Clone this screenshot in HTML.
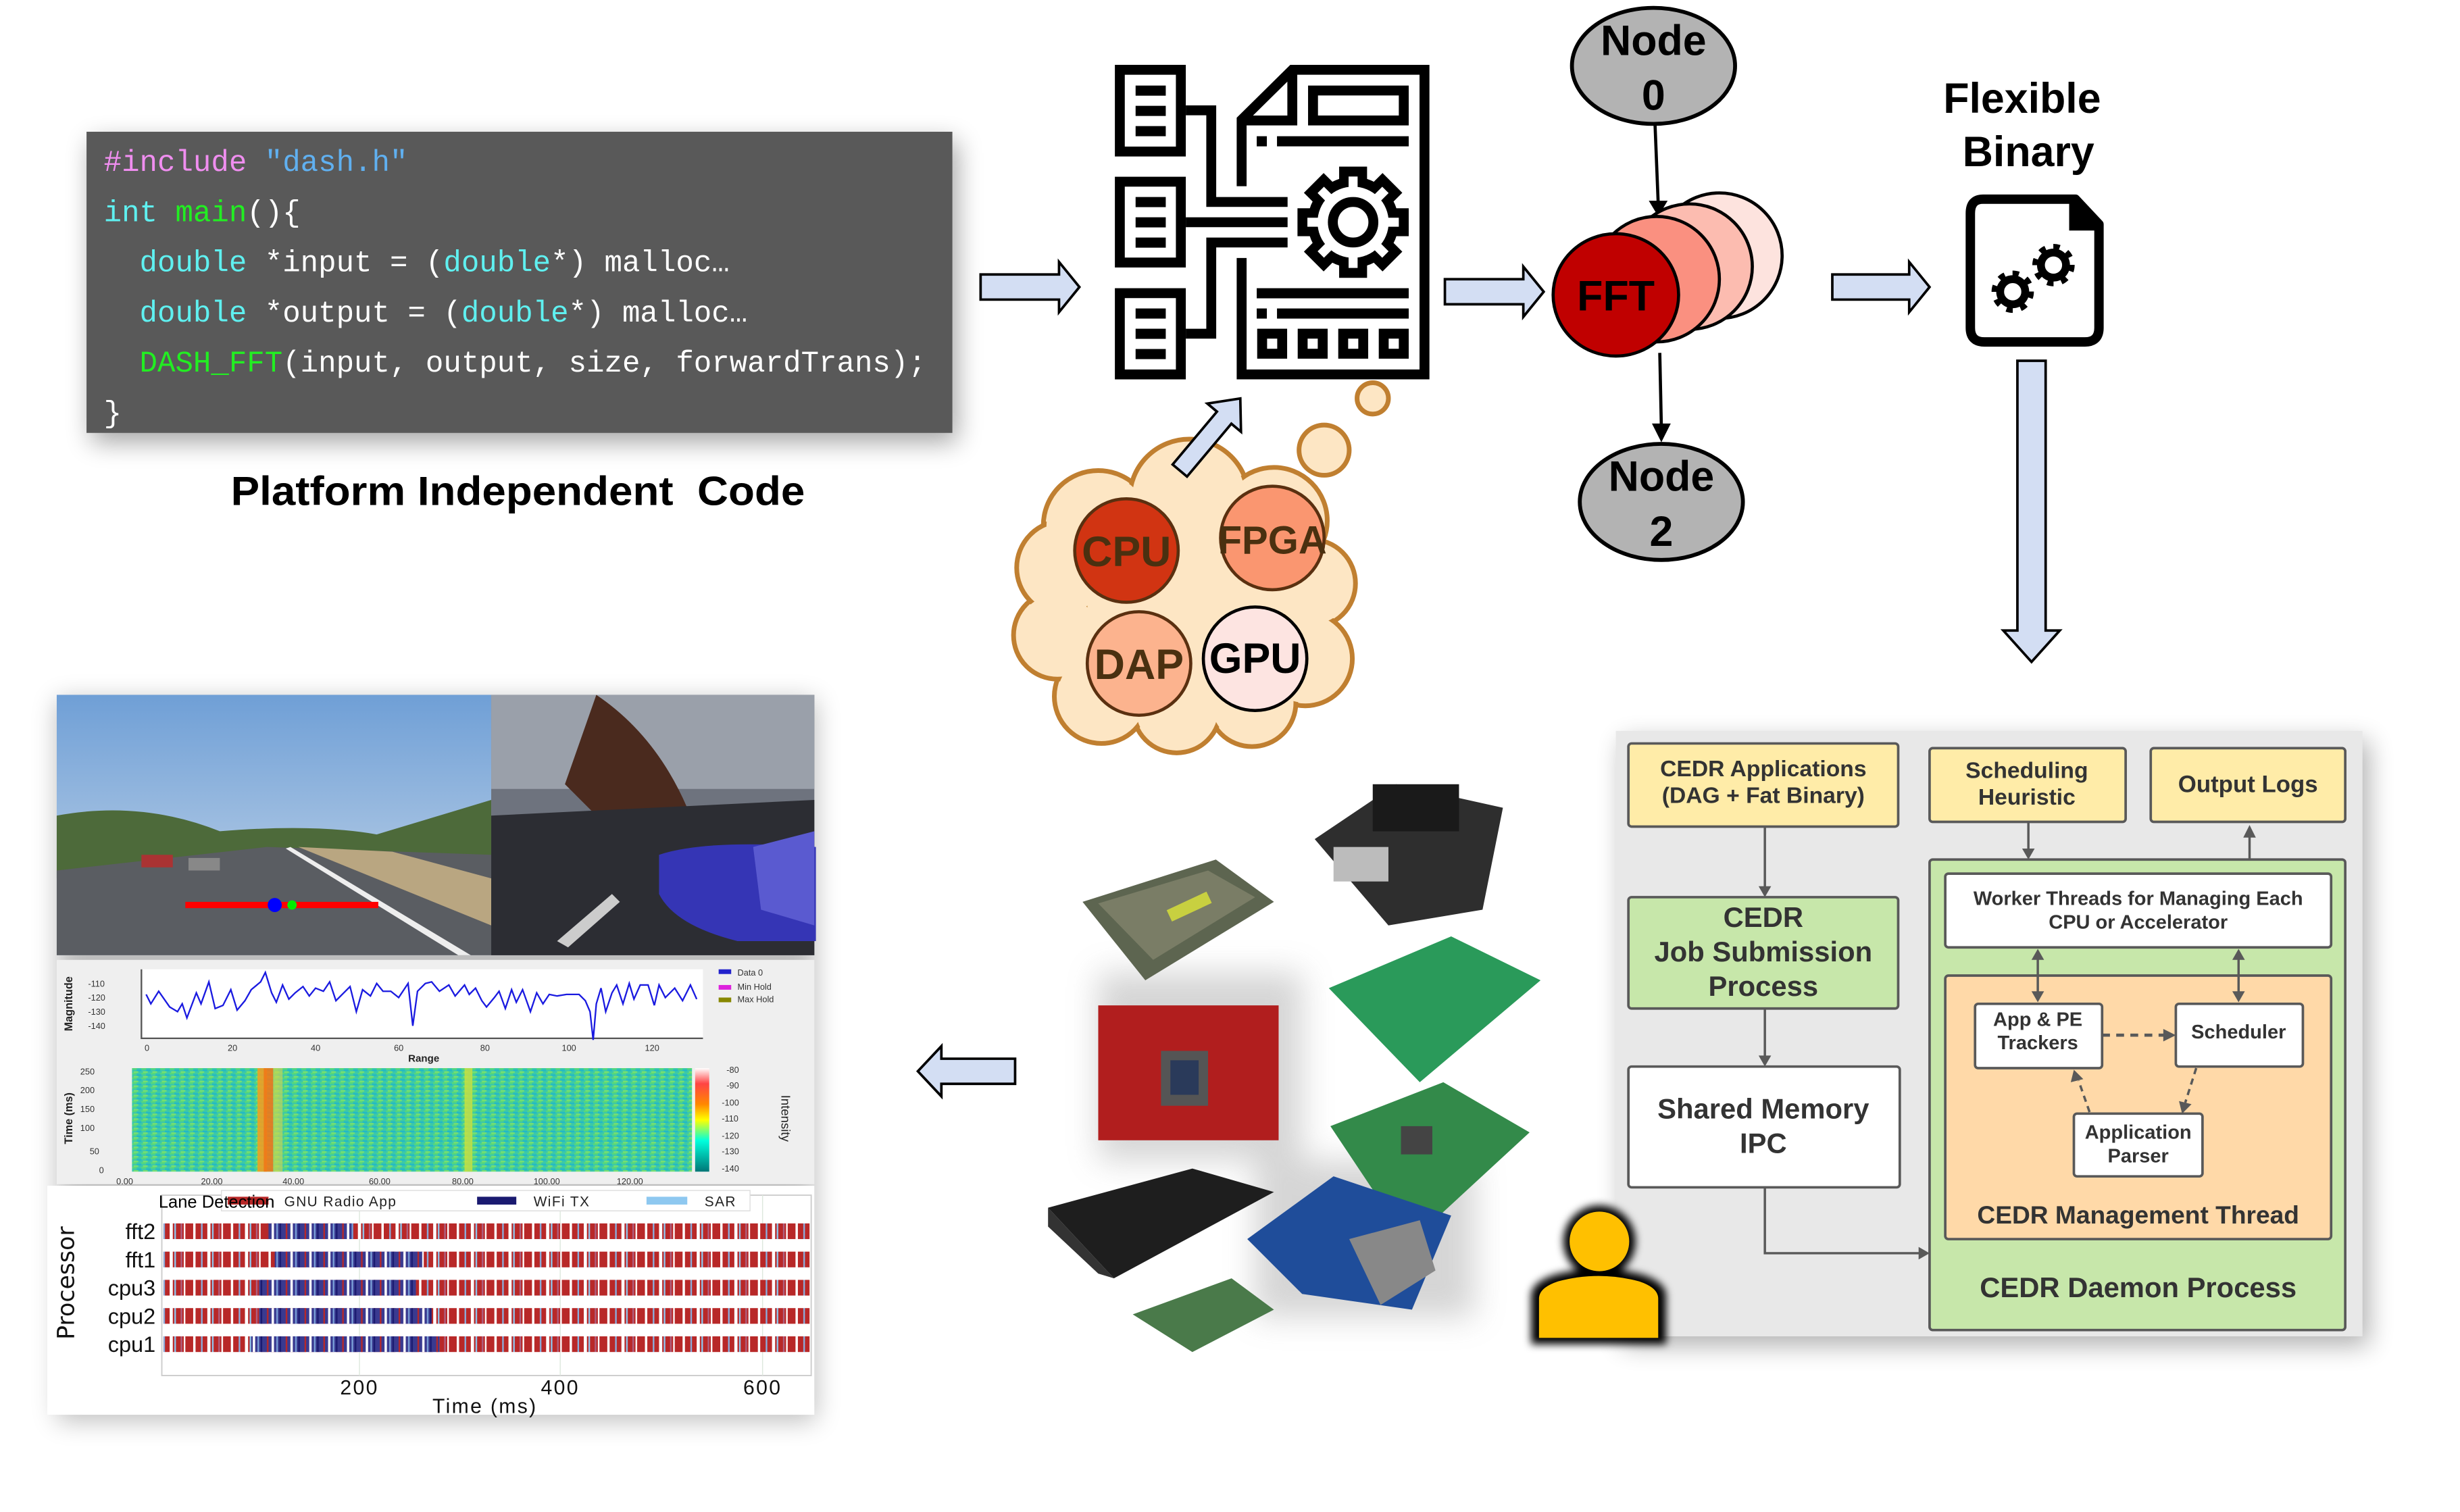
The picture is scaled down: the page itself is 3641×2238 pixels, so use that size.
<!DOCTYPE html>
<html><head><meta charset="utf-8">
<style>
html,body{margin:0;padding:0;background:#fff;}
svg{display:block;}
text{font-family:"Liberation Sans",sans-serif;}
.mono{font-family:"Liberation Mono",monospace;font-size:19px;}
.lm{font-family:"Liberation Mono",monospace;}
.dv{font-family:"DejaVu Sans",sans-serif;}
.b{font-weight:bold;}
</style></head>
<body>
<svg width="3641" height="2238" viewBox="0 0 1568 964" xmlns="http://www.w3.org/2000/svg">
<defs>
<filter id="sh" x="-20%" y="-20%" width="140%" height="150%"><feGaussianBlur stdDeviation="8"/></filter>
<filter id="glow" x="-30%" y="-30%" width="160%" height="160%"><feGaussianBlur stdDeviation="2.5"/></filter>
<filter id="soft" x="-30%" y="-30%" width="160%" height="160%"><feGaussianBlur stdDeviation="10"/></filter>
<linearGradient id="sky" x1="0" y1="0" x2="0" y2="1"><stop offset="0" stop-color="#6f9fd6"/><stop offset="1" stop-color="#c9d9ea"/></linearGradient>
<linearGradient id="cbar" x1="0" y1="0" x2="0" y2="1"><stop offset="0" stop-color="#fff"/><stop offset="0.15" stop-color="#f44"/><stop offset="0.35" stop-color="#f80"/><stop offset="0.5" stop-color="#ff0"/><stop offset="0.7" stop-color="#0fd"/><stop offset="1" stop-color="#077"/></linearGradient>
<pattern id="spec" width="6" height="3" patternUnits="userSpaceOnUse"><rect width="6" height="3" fill="#3cc8a8"/><rect width="3" height="1" fill="#58d878"/><rect x="3" y="1" width="3" height="1" fill="#20b8c8"/><rect x="1" y="2" width="3" height="1" fill="#78e070"/></pattern>
<pattern id="gA" width="24" height="10" patternUnits="userSpaceOnUse"><rect width="24" height="10" fill="#b82828"/><rect x="3" width="1.5" height="10" fill="#fff"/><rect x="8" width="1" height="10" fill="#8ab0e0"/><rect x="12" width="2" height="10" fill="#fff"/><rect x="15" width="1" height="10" fill="#8ec8f0"/><rect x="19" width="1" height="10" fill="#b06080"/><rect x="21" width="1" height="10" fill="#fff"/></pattern>
<pattern id="gB" width="12" height="10" patternUnits="userSpaceOnUse"><rect width="12" height="10" fill="#3a3a90"/><rect x="2" width="1" height="10" fill="#b82828"/><rect x="5" width="1.5" height="10" fill="#fff"/><rect x="8" width="1" height="10" fill="#7aa0d8"/><rect x="10" width="1" height="10" fill="#1a1a70"/></pattern>
</defs>

<!-- ===== Code box ===== -->
<rect x="58" y="90" width="552" height="192" fill="#000" opacity="0.35" filter="url(#sh)"/>
<rect x="55" y="84" width="552" height="192" fill="#595959"/>
<text class="mono" x="66" y="109"><tspan fill="#f08ef0">#include</tspan><tspan fill="#60b0f0"> "dash.h"</tspan></text>
<text class="mono" x="66" y="141"><tspan fill="#5ff0f0">int</tspan> <tspan fill="#22ee22">main</tspan><tspan fill="#fff">(){</tspan></text>
<text class="mono" x="66" y="173" fill="#fff" xml:space="preserve">  <tspan fill="#5ff0f0">double</tspan> *input = (<tspan fill="#5ff0f0">double</tspan>*) malloc…</text>
<text class="mono" x="66" y="205" fill="#fff" xml:space="preserve">  <tspan fill="#5ff0f0">double</tspan> *output = (<tspan fill="#5ff0f0">double</tspan>*) malloc…</text>
<text class="mono" x="66" y="237" fill="#fff" xml:space="preserve">  <tspan fill="#22ee22">DASH_FFT</tspan>(input, output, size, forwardTrans);</text>
<text class="mono" x="66" y="269" fill="#fff">}</text>
<text x="330" y="322" font-size="26" class="b" text-anchor="middle" fill="#000" xml:space="preserve" textLength="366" lengthAdjust="spacingAndGlyphs">Platform Independent  Code</text>

<!-- arrows -->
<g fill="#d3def3" stroke="#000" stroke-width="1.6">
<path d="M625,175 H675 V167 L688,183 L675,199 V191 H625 Z"/>
<path d="M921,178 H971 V170 L984,186 L971,202 V194 H921 Z"/>
<path d="M1168,175 H1217 V167 L1230,183 L1217,199 V191 H1168 Z"/>
<path d="M647,675 H600 V667 L585,683 L600,699 V691 H647 Z"/>
<path d="M1286,230 H1304 V402 H1313 L1295,422 L1277,402 H1286 Z"/>
</g>

<!-- ===== Compiler icon ===== -->
<g transform="translate(706.3,38.76) scale(0.14355)">
<g fill="none" stroke="#000" stroke-width="44">
<rect x="52" y="40" width="271" height="363"/>
<rect x="52" y="537" width="271" height="359"/>
<rect x="52" y="1032" width="271" height="361"/>
<path d="M345,220 H458 V627 H797"/>
<path d="M345,717 H797"/>
<path d="M345,1212 H458 V807 H797"/>
<path d="M593,557 V262 L818,40 H1405 V1393 H593 V876"/>
<path d="M593,265 H818 V40"/>
<rect x="910" y="132" width="403" height="133"/>
<rect x="684" y="1212" width="89" height="89"/>
<rect x="864" y="1212" width="89" height="89"/>
<rect x="1044" y="1212" width="89" height="89"/>
<rect x="1224" y="1212" width="89" height="89"/>
<circle cx="1088" cy="717" r="90"/>
</g>
<g fill="#000">
<rect x="122" y="110" width="134" height="45"/><rect x="122" y="200" width="134" height="45"/><rect x="122" y="290" width="134" height="45"/>
<rect x="122" y="605" width="134" height="45"/><rect x="122" y="695" width="134" height="45"/><rect x="122" y="785" width="134" height="45"/>
<rect x="122" y="1100" width="134" height="45"/><rect x="122" y="1190" width="134" height="45"/><rect x="122" y="1280" width="134" height="45"/>
<rect x="660" y="335" width="45" height="45"/><rect x="750" y="335" width="585" height="45"/>
<rect x="660" y="1010" width="675" height="45"/>
<rect x="660" y="1100" width="45" height="45"/><rect x="750" y="1100" width="585" height="45"/>
</g>
<g transform="translate(1088,717)">
<circle r="202" fill="#000"/>
<g fill="#000">
<rect x="-62" y="-247" width="124" height="100"/>
<rect x="-62" y="-247" width="124" height="100" transform="rotate(45)"/>
<rect x="-62" y="-247" width="124" height="100" transform="rotate(90)"/>
<rect x="-62" y="-247" width="124" height="100" transform="rotate(135)"/>
<rect x="-62" y="-247" width="124" height="100" transform="rotate(180)"/>
<rect x="-62" y="-247" width="124" height="100" transform="rotate(225)"/>
<rect x="-62" y="-247" width="124" height="100" transform="rotate(270)"/>
<rect x="-62" y="-247" width="124" height="100" transform="rotate(315)"/>
</g>
<circle r="158" fill="#fff"/>
<g fill="#fff">
<rect x="-20" y="-203" width="40" height="70"/>
<rect x="-20" y="-203" width="40" height="70" transform="rotate(45)"/>
<rect x="-20" y="-203" width="40" height="70" transform="rotate(90)"/>
<rect x="-20" y="-203" width="40" height="70" transform="rotate(135)"/>
<rect x="-20" y="-203" width="40" height="70" transform="rotate(180)"/>
<rect x="-20" y="-203" width="40" height="70" transform="rotate(225)"/>
<rect x="-20" y="-203" width="40" height="70" transform="rotate(270)"/>
<rect x="-20" y="-203" width="40" height="70" transform="rotate(315)"/>
</g>
<circle r="90" fill="none" stroke="#000" stroke-width="44"/>
</g>
</g>

<!-- ===== Cloud ===== -->
<g stroke="#c07f30" stroke-width="3" fill="#fde6c4">
<circle cx="700" cy="335" r="35"/><circle cx="758" cy="318" r="38"/><circle cx="812" cy="332" r="34"/>
<circle cx="836" cy="372" r="28"/><circle cx="832" cy="420" r="30"/><circle cx="798" cy="448" r="28"/>
<circle cx="750" cy="452" r="28"/><circle cx="702" cy="444" r="30"/><circle cx="674" cy="405" r="28"/><circle cx="678" cy="362" r="30"/>
</g>
<g fill="#fde6c4">
<circle cx="700" cy="335" r="33"/><circle cx="758" cy="318" r="36"/><circle cx="812" cy="332" r="32"/>
<circle cx="836" cy="372" r="26"/><circle cx="832" cy="420" r="28"/><circle cx="798" cy="448" r="26"/>
<circle cx="750" cy="452" r="26"/><circle cx="702" cy="444" r="28"/><circle cx="674" cy="405" r="26"/><circle cx="678" cy="362" r="28"/>
<circle cx="755" cy="390" r="62"/>
</g>
<g stroke="#c07f30" stroke-width="3" fill="#fde6c4">
<circle cx="844" cy="287" r="16"/><circle cx="875" cy="254" r="10"/>
</g>
<g stroke-width="2">
<circle cx="718" cy="351" r="33" fill="#d13412" stroke="#5a3010"/>
<circle cx="811" cy="343" r="33" fill="#fa9670" stroke="#5a3010"/>
<circle cx="726" cy="423" r="33" fill="#fcb38e" stroke="#5a3010"/>
<circle cx="800" cy="420" r="33" fill="#fde4e1" stroke="#000"/>
</g>
<g class="b" font-size="27" text-anchor="middle" fill="#4a3010">
<text x="718" y="361">CPU</text>
<text x="811" y="353" font-size="25">FPGA</text>
<text x="726" y="433">DAP</text>
<text x="800" y="429" fill="#000">GPU</text>
</g>
<g transform="translate(752,300) rotate(-50)" fill="#d3def3" stroke="#000" stroke-width="1.6">
<path d="M0,-6 H44 V-14 L60,0 L44,14 V6 H0 Z"/>
</g>

<!-- ===== DAG ===== -->
<g stroke="#000" stroke-width="2">
<line x1="1055" y1="80" x2="1057" y2="130"/>
<line x1="1058" y1="225" x2="1059" y2="272"/>
</g>
<path d="M1051,128 L1063,128 L1057,138 Z" fill="#000"/>
<path d="M1053,270 L1065,270 L1059,282 Z" fill="#000"/>
<ellipse cx="1054" cy="42" rx="52" ry="37" fill="#b3b3b3" stroke="#000" stroke-width="2.5"/>
<ellipse cx="1059" cy="320" rx="52" ry="37" fill="#b3b3b3" stroke="#000" stroke-width="2.5"/>
<g class="b" font-size="27" text-anchor="middle" fill="#000">
<text x="1054" y="35">Node</text><text x="1054" y="70">0</text>
<text x="1059" y="313">Node</text><text x="1059" y="348">2</text>
</g>
<g stroke="#000" stroke-width="2">
<circle cx="1096" cy="163" r="40" fill="#fde3de"/>
<circle cx="1077" cy="170" r="40" fill="#fcbcb0"/>
<circle cx="1056" cy="178" r="40" fill="#fa9080"/>
<ellipse cx="1030" cy="188" rx="40" ry="39" fill="#c00000"/>
</g>
<text x="1030" y="198" class="b" font-size="27" text-anchor="middle" fill="#000">FFT</text>

<!-- Flexible binary -->
<g class="b" font-size="27" text-anchor="middle" fill="#000">
<text x="1289" y="72">Flexible</text><text x="1293" y="106">Binary</text>
</g>
<path d="M1264,127 H1323 L1338,143 V209 Q1338,218 1329,218 H1265 Q1256,218 1256,209 V136 Q1256,127 1264,127 Z" fill="#fff" stroke="#000" stroke-width="6" stroke-linejoin="round"/>
<path d="M1319,125 L1341,147 L1319,147 Z" fill="#000"/>
<g fill="none" stroke="#000">
<circle cx="1283" cy="186" r="8" stroke-width="5"/>
<circle cx="1283" cy="186" r="11.5" stroke-width="4" stroke-dasharray="4 5"/>
<circle cx="1309" cy="169" r="8" stroke-width="5"/>
<circle cx="1309" cy="169" r="11.5" stroke-width="4" stroke-dasharray="4 5"/>
</g>

<!-- ===== CEDR diagram ===== -->
<rect x="1034" y="472" width="476" height="386" fill="#000" opacity="0.3" filter="url(#sh)"/>
<rect x="1030" y="466" width="476" height="386" fill="#e8e8e8"/>
<g stroke="#595959" stroke-width="1.6">
<rect x="1038" y="474" width="172" height="53" fill="#ffeca8" rx="2"/>
<rect x="1230" y="477" width="125" height="47" fill="#ffeca8" rx="2"/>
<rect x="1371" y="477" width="124" height="47" fill="#ffeca8" rx="2"/>
<rect x="1038" y="572" width="172" height="71" fill="#c7e7aa" rx="2"/>
<rect x="1038" y="680" width="173" height="77" fill="#fff" rx="2"/>
<rect x="1230" y="548" width="265" height="300" fill="#c7e7aa" rx="2"/>
<rect x="1240" y="557" width="246" height="47" fill="#fff" rx="2"/>
<rect x="1240" y="622" width="246" height="168" fill="#ffd9a8" rx="2"/>
<rect x="1259" y="640" width="81" height="41" fill="#fff" rx="2"/>
<rect x="1387" y="640" width="81" height="40" fill="#fff" rx="2"/>
<rect x="1322" y="710" width="82" height="40" fill="#fff" rx="2"/>
</g>
<g stroke="#595959" stroke-width="1.5" fill="none">
<line x1="1125" y1="527" x2="1125" y2="566"/>
<line x1="1125" y1="643" x2="1125" y2="674"/>
<path d="M1125,757 V799 H1224"/>
<line x1="1293" y1="524" x2="1293" y2="543"/>
<line x1="1434" y1="532" x2="1434" y2="548"/>
<line x1="1299" y1="611" x2="1299" y2="633"/>
<line x1="1427" y1="611" x2="1427" y2="633"/>
<line x1="1340" y1="660" x2="1380" y2="660" stroke-dasharray="5 4" stroke-width="2"/>
<line x1="1332" y1="709" x2="1325" y2="689" stroke-dasharray="4 3"/>
<line x1="1400" y1="681" x2="1393" y2="703" stroke-dasharray="4 3"/>
</g>
<g fill="#595959">
<path d="M1121,565 L1129,565 L1125,572 Z"/>
<path d="M1121,673 L1129,673 L1125,680 Z"/>
<path d="M1223,795 L1223,803 L1230,799 Z"/>
<path d="M1289,541 L1297,541 L1293,548 Z"/>
<path d="M1430,534 L1438,534 L1434,526 Z"/>
<path d="M1295,612 L1303,612 L1299,605 Z"/><path d="M1295,632 L1303,632 L1299,639 Z"/>
<path d="M1423,612 L1431,612 L1427,605 Z"/><path d="M1423,632 L1431,632 L1427,639 Z"/>
<path d="M1379,656 L1379,664 L1387,660 Z"/>
<path d="M1320,690 L1328,688 L1322,682 Z"/>
<path d="M1389,702 L1397,704 L1391,710 Z"/>
</g>
<g class="b" fill="#333" text-anchor="middle">
<text x="1124" y="495" font-size="14.5">CEDR Applications</text>
<text x="1124" y="512" font-size="14.5">(DAG + Fat Binary)</text>
<text x="1292" y="496" font-size="14.5">Scheduling</text>
<text x="1292" y="513" font-size="14.5">Heuristic</text>
<text x="1433" y="505" font-size="15">Output Logs</text>
<text x="1124" y="591" font-size="18">CEDR</text>
<text x="1124" y="613" font-size="18">Job Submission</text>
<text x="1124" y="635" font-size="18">Process</text>
<text x="1124" y="713" font-size="18">Shared Memory</text>
<text x="1124" y="735" font-size="18">IPC</text>
<text x="1363" y="577" font-size="12.5">Worker Threads for Managing Each</text>
<text x="1363" y="592" font-size="12.5">CPU or Accelerator</text>
<text x="1299" y="654" font-size="12.5">App &amp; PE</text>
<text x="1299" y="669" font-size="12.5">Trackers</text>
<text x="1427" y="662" font-size="12.5">Scheduler</text>
<text x="1363" y="726" font-size="12.5">Application</text>
<text x="1363" y="741" font-size="12.5">Parser</text>
<text x="1363" y="780" font-size="16">CEDR Management Thread</text>
<text x="1363" y="827" font-size="18">CEDR Daemon Process</text>
</g>

<!-- person -->
<g fill="#000" filter="url(#glow)">
<circle cx="1019.5" cy="791.5" r="23"/>
<path d="M976,857 V826 Q976,818 990,813 Q1019,805 1048,813 Q1062,818 1062,826 V857 Z"/>
</g>
<circle cx="1019.5" cy="791.5" r="19" fill="#ffc000"/>
<path d="M981,853 V828 Q981,821 993,817 Q1019,810 1045,817 Q1057,821 1057,828 V853 Z" fill="#ffc000"/>

<!-- ===== Hardware ===== -->
<g opacity="0.35" filter="url(#soft)">
<rect x="700" y="620" width="130" height="120" fill="#888"/>
<rect x="800" y="740" width="140" height="100" fill="#888"/>
</g>
<g>
<path d="M690,575 L775,548 L812,575 L730,625 Z" fill="#5d6550"/>
<path d="M700,576 L770,555 L800,572 L735,612 Z" fill="#7a7d66"/>
<rect x="744" y="574" width="28" height="8" fill="#c8d040" transform="rotate(-25 758 578)"/>
<path d="M838,535 L890,500 L958,515 L945,580 L885,590 Z" fill="#2e2e2e"/>
<rect x="875" y="500" width="55" height="30" fill="#1a1a1a"/>
<rect x="850" y="540" width="35" height="22" fill="#bcbcbc"/>
<rect x="700" y="641" width="115" height="86" fill="#b11e1e"/>
<rect x="740" y="670" width="30" height="35" fill="#555"/>
<rect x="746" y="676" width="18" height="22" fill="#2a3a5a"/>
<path d="M847,630 L925,597 L982,625 L905,690 Z" fill="#2a9a5a"/>
<path d="M848,718 L920,690 L975,722 L898,793 Z" fill="#338a4a"/>
<rect x="893" y="718" width="20" height="18" fill="#444"/>
<path d="M668,770 L760,745 L812,760 L710,815 Z" fill="#1e1e1e"/>
<path d="M668,770 L710,815 L700,812 L668,782 Z" fill="#333"/>
<path d="M795,790 L850,750 L925,775 L900,835 L830,825 Z" fill="#1f4d9a"/>
<path d="M860,790 L905,778 L915,810 L880,832 Z" fill="#888"/>
<path d="M722,838 L785,815 L812,835 L760,862 Z" fill="#4a7a4a"/>
</g>

<!-- ===== Left panel ===== -->
<rect x="36" y="446" width="484" height="460" fill="#000" opacity="0.25" filter="url(#sh)"/>
<!-- photo left -->
<rect x="36" y="443" width="277" height="166" fill="url(#sky)"/>
<path d="M36,520 Q90,510 140,530 Q200,525 240,532 Q280,520 313,510 V560 H36 Z" fill="#4d6a3a"/>
<path d="M36,555 L170,540 L313,545 V609 H36 Z" fill="#5a5d62"/>
<path d="M190,540 L313,590 V560 L250,543 Z" fill="#b9a681"/>
<path d="M185,540 L300,609 L292,609 L182,541 Z" fill="#eee"/>
<rect x="118" y="575" width="123" height="4" fill="#f00"/>
<circle cx="175" cy="577" r="4.5" fill="#00f"/>
<circle cx="186" cy="577" r="3" fill="#0e0"/>
<rect x="90" y="545" width="20" height="8" fill="#a33"/><rect x="120" y="547" width="20" height="8" fill="#888"/>
<!-- photo right -->
<rect x="313" y="443" width="206" height="166" fill="#6e737e"/>
<rect x="313" y="443" width="206" height="60" fill="#9aa0aa"/>
<path d="M380,443 Q420,470 440,520 L400,540 L360,500 Z" fill="#4a2a1e"/>
<path d="M313,520 L519,510 V609 H313 Z" fill="#2c2d33"/>
<path d="M420,545 Q450,535 520,540 V600 L470,600 Q430,590 420,570 Z" fill="#3535b5"/>
<path d="M480,540 L519,530 V590 L485,580 Z" fill="#5a5ad0"/>
<path d="M355,600 L390,570 L395,575 L362,604 Z" fill="#ccc"/>
<!-- magnitude plot -->
<rect x="36" y="612" width="483" height="143" fill="#efefef"/>
<rect x="90" y="618" width="358" height="44" fill="#fff"/>
<path d="M90,618 V662 H448" fill="none" stroke="#555" stroke-width="1"/>
<polyline fill="none" stroke="#1a1ae0" stroke-width="1" points="93,634 96,640 101,632 108,642 113,645 116,640 119,649 125,633 128,640 133,626 137,643 142,641 147,631 151,644 156,638 160,631 166,626 169,620 173,633 176,639 180,628 184,637 188,633 193,629 197,635 201,630 206,632 210,626 214,638 219,633 223,629 227,645 231,631 236,635 240,627 244,632 249,632 254,636 260,627 263,654 266,632 271,627 275,626 280,632 286,628 290,635 296,628 299,634 303,630 307,638 310,642 315,636 318,632 322,643 326,631 329,639 333,631 338,645 342,633 346,640 350,634 355,635 361,634 369,634 373,638 376,645 378,663 380,640 383,630 386,645 390,633 393,628 397,640 401,627 404,637 408,628 413,628 417,641"/>
<polyline fill="none" stroke="#1a1ae0" stroke-width="1" points="417,641 420,628 424,636 430,630 435,638 440,628 444,637"/>
<g class="lm" font-size="5.5" fill="#333">
<text x="56" y="629">-110</text><text x="56" y="638">-120</text><text x="56" y="647">-130</text><text x="56" y="656">-140</text>
<text x="92" y="670">0</text><text x="145" y="670">20</text><text x="198" y="670">40</text><text x="251" y="670">60</text><text x="306" y="670">80</text><text x="358" y="670">100</text><text x="411" y="670">120</text>
</g>
<text x="270" y="677" font-size="6.5" class="b" text-anchor="middle" fill="#222">Range</text>
<text transform="translate(46,640) rotate(-90)" font-size="7" class="b" text-anchor="middle" fill="#222">Magnitude</text>
<g font-size="5.5" fill="#333" class="lm"><rect x="458" y="618" width="8" height="3" fill="#22c"/><text x="470" y="622">Data 0</text>
<rect x="458" y="628" width="8" height="3" fill="#d2d"/><text x="470" y="631">Min Hold</text>
<rect x="458" y="636" width="8" height="3" fill="#880"/><text x="470" y="639">Max Hold</text></g>
<!-- spectrogram -->
<rect x="84" y="681" width="357" height="66" fill="url(#spec)"/>
<rect x="164" y="681" width="6" height="66" fill="#f0a020" opacity="0.9"/>
<rect x="168" y="681" width="6" height="66" fill="#f07818" opacity="0.9"/>
<rect x="174" y="681" width="6" height="66" fill="#c8d850" opacity="0.7"/>
<rect x="296" y="681" width="5" height="66" fill="#c8e040" opacity="0.85"/>
<rect x="443" y="681" width="9" height="66" fill="url(#cbar)"/>
<g class="lm" font-size="5.5" fill="#333">
<text x="51" y="685">250</text><text x="51" y="697">200</text><text x="51" y="709">150</text><text x="51" y="721">100</text><text x="57" y="736">50</text><text x="63" y="748">0</text>
<text x="74" y="755">0.00</text><text x="128" y="755">20.00</text><text x="180" y="755">40.00</text><text x="235" y="755">60.00</text><text x="288" y="755">80.00</text><text x="340" y="755">100.00</text><text x="393" y="755">120.00</text>
<text x="463" y="684">-80</text><text x="463" y="694">-90</text><text x="460" y="705">-100</text><text x="460" y="715">-110</text><text x="460" y="726">-120</text><text x="460" y="736">-130</text><text x="460" y="747">-140</text>
</g>
<text transform="translate(46,713) rotate(-90)" font-size="7" class="b" text-anchor="middle" fill="#222">Time (ms)</text>
<text transform="translate(498,713) rotate(90)" font-size="8" text-anchor="middle" fill="#222">Intensity</text>
<!-- gantt -->
<rect x="30" y="756" width="489" height="146" fill="#fff"/>
<rect x="103" y="762" width="414" height="115" fill="#fff" stroke="#ccc" stroke-width="0.8"/>
<g stroke="#dde8dd" stroke-width="0.6"><line x1="229" y1="762" x2="229" y2="877"/><line x1="357" y1="762" x2="357" y2="877"/><line x1="486" y1="762" x2="486" y2="877"/></g>
<g>
<rect x="104" y="780" width="412" height="10" fill="url(#gA)"/>
<rect x="104" y="798" width="412" height="10" fill="url(#gA)"/>
<rect x="104" y="816" width="412" height="10" fill="url(#gA)"/>
<rect x="104" y="834" width="412" height="10" fill="url(#gA)"/>
<rect x="104" y="852" width="412" height="10" fill="url(#gA)"/>
<rect x="170" y="780" width="55" height="10" fill="url(#gB)"/>
<rect x="175" y="798" width="95" height="10" fill="url(#gB)"/>
<rect x="165" y="816" width="100" height="10" fill="url(#gB)"/>
<rect x="165" y="834" width="110" height="10" fill="url(#gB)"/>
<rect x="160" y="852" width="120" height="10" fill="url(#gB)"/>
</g>
<rect x="141" y="759" width="337" height="13" fill="#fff" stroke="#ddd" stroke-width="0.6"/>
<rect x="145" y="763" width="26" height="5" fill="#b82828"/>
<rect x="304" y="763" width="25" height="5" fill="#1a1a70"/>
<rect x="412" y="763" width="26" height="5" fill="#8ec8f0"/>
<text x="101" y="770" font-size="11" fill="#000">Lane Detection</text>
<g class="dv" font-size="9" fill="#222" letter-spacing="0.6">
<text x="181" y="769">GNU Radio App</text><text x="340" y="769">WiFi TX</text><text x="449" y="769">SAR</text>
</g>
<g class="dv" font-size="14" fill="#111" text-anchor="end">
<text x="99" y="790">fft2</text><text x="99" y="808">fft1</text><text x="99" y="826">cpu3</text><text x="99" y="844">cpu2</text><text x="99" y="862">cpu1</text>
</g>
<text transform="translate(47,818) rotate(-90)" class="dv" font-size="15" text-anchor="middle" fill="#111">Processor</text>
<g class="dv" font-size="13" fill="#111" text-anchor="middle" letter-spacing="1">
<text x="229" y="889">200</text><text x="357" y="889">400</text><text x="486" y="889">600</text>
<text x="309" y="901">Time (ms)</text>
</g>
</svg>
</body></html>
